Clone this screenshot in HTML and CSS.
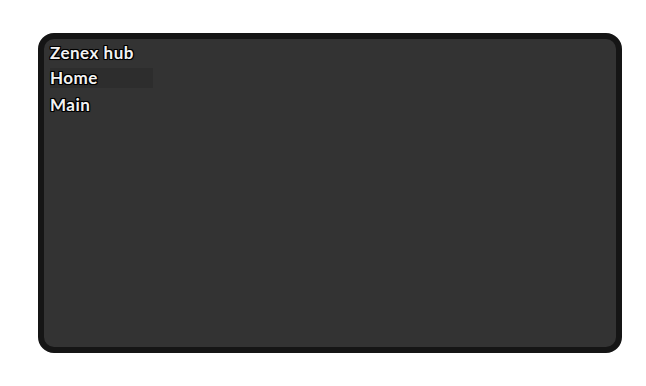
FILE: index.html
```html
<!DOCTYPE html>
<html lang="en">
<head>
  <meta charset="UTF-8">
  <title>Zenex hub</title>
  <link rel="stylesheet" href="styles.css">
</head>
<body>
  <div class="panel">
    <div class="titulo">Zenex hub</div>
    <div class="item activo">Home</div>
    <div class="item">Main</div>
  </div>
</body>
</html>
```

FILE: styles.css
```css
body { margin: 0; background: #ffffff; font-family: Lato, "Open Sans", sans-serif; }
.panel { margin: 33px 0 0 38px; width: 560px; height: 300px; background: #333333; border: 6px solid #151515; border-radius: 16px; padding: 4px 6px; display: flex; flex-direction: column; gap: 5px; }
.titulo, .item { font-size: 17px; font-weight: 700; letter-spacing: 0.5px; line-height: 20px; color: #f2f2f2; text-shadow: 1px 0 0 #000, -1px 0 0 #000, 0 1px 0 #000, 0 -1px 0 #000, 1px 1px 0 #000, -1px -1px 0 #000, 1px -1px 0 #000, -1px 1px 0 #000, 0 0 2px #000; }
.item { width: 103px; }
.activo { background: #2d2d2d; margin-bottom: 2px; }
```
